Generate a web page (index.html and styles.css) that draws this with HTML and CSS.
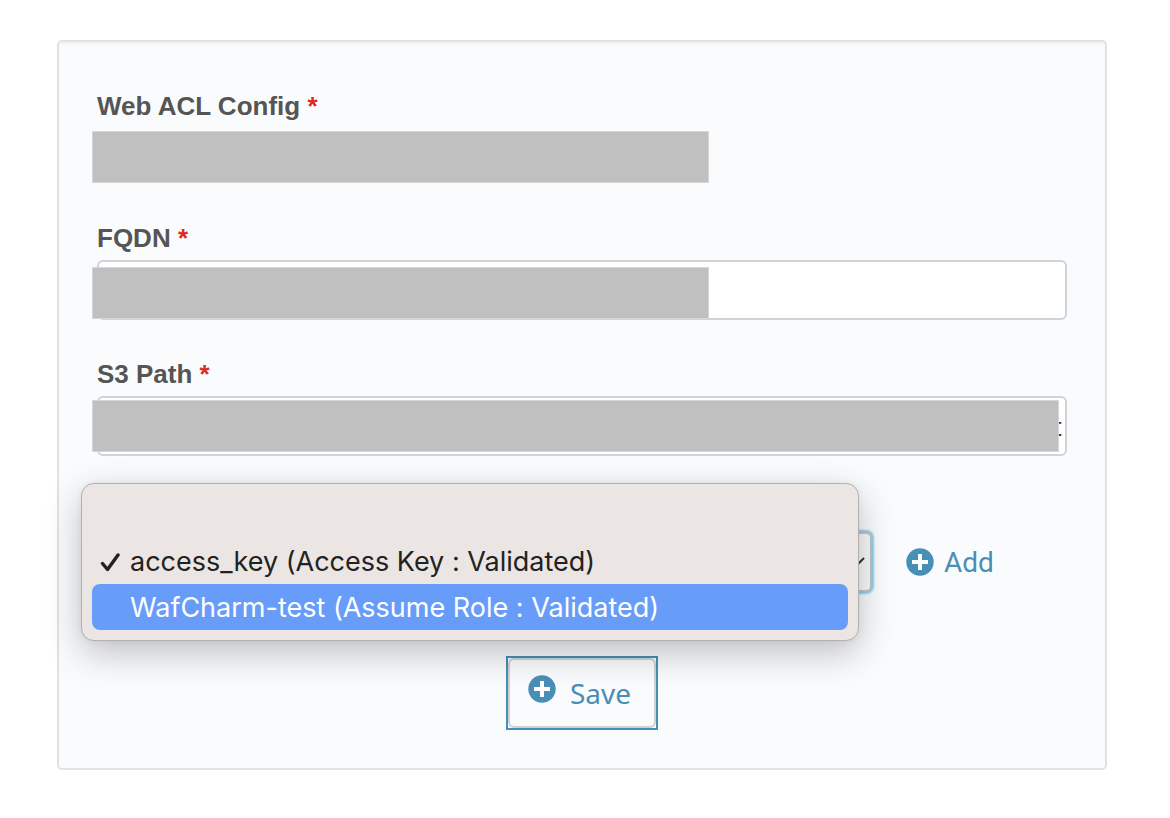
FILE: index.html
```html
<!DOCTYPE html>
<html lang="en">
<head>
<meta charset="utf-8">
<meta name="viewport" content="width=device-width, initial-scale=1">
<title>Web ACL Config</title>
<link rel="stylesheet" href="styles.css">
</head>
<body>
<form class="card">
  <div class="group">
    <label class="label" for="acl">Web ACL Config <span class="required">*</span></label>
    <div class="field">
      <input class="plain" id="acl" type="text" readonly>
      <span class="mask mask-acl"></span>
    </div>
  </div>
  <div class="group">
    <label class="label" for="fqdn">FQDN <span class="required">*</span></label>
    <div class="field">
      <input class="input" id="fqdn" type="text">
      <span class="mask mask-fqdn"></span>
    </div>
  </div>
  <div class="group">
    <label class="label" for="path">S3 Path <span class="required">*</span></label>
    <div class="field">
      <input class="input input-end" id="path" type="text" value="t">
      <span class="mask mask-path"></span>
    </div>
  </div>
  <div class="credential">
    <div class="picker">
      <select class="select" aria-label="Credential">
        <option>access_key (Access Key : Validated)</option>
        <option>WafCharm-test (Assume Role : Validated)</option>
      </select>
      <svg class="chevron" viewBox="0 0 20 12" aria-hidden="true"><path d="M2 2l8 8 8-8"/></svg>
      <div class="menu" role="listbox" aria-label="Credential">
        <button class="option" type="button" role="option" aria-label="None"></button>
        <button class="option" type="button" role="option" aria-selected="true"><svg class="check" viewBox="0 0 20 20" aria-hidden="true"><path d="M2.500 11.500l5 6L18 3"/></svg>access_key (Access Key : Validated)</button>
        <button class="option option-active" type="button" role="option">WafCharm-test (Assume Role : Validated)</button>
      </div>
    </div>
    <a class="add" href="#"><svg class="plus" viewBox="0 0 28 28" aria-hidden="true"><circle cx="14" cy="14" r="13.700"/><path d="M14 6v16M6 14h16"/></svg>Add</a>
  </div>
  <button class="save" type="submit"><span class="save-face"><svg class="plus" viewBox="0 0 28 28" aria-hidden="true"><circle cx="14" cy="14" r="13.700"/><path d="M14 6v16M6 14h16"/></svg><span class="save-text">Save</span></span></button>
</form>
</body>
</html>
```
FILE: styles.css
```css
* {
  box-sizing: border-box;
}

body {
  margin: 0;
  padding: 40px 63px 48px 57px;
  background: #fff;
  font-family: "Liberation Sans", Arial, sans-serif;
}

.card {
  display: flex;
  flex-direction: column;
  gap: 36px;
  padding: 46px 38px 38px;
  border: 2px solid #e1e2e3;
  border-radius: 5px;
  background: #fafbfd;
  box-shadow: inset 0 2px 2px #f1f2f4;
}

.group {
  display: flex;
  flex-direction: column;
  gap: 4px;
}

.label {
  color: #555;
  font-size: 26px;
  font-weight: bold;
  line-height: 36px;
}

.required {
  color: #dd2c1e;
}

.field {
  position: relative;
  display: flex;
}

.plain,
.input {
  flex: 1;
  min-width: 0;
  height: 60px;
  padding: 0 4px;
  border: 2px solid #ced3d8;
  border-radius: 6px;
  background: #fff;
  color: #333;
  font: 26px "Noto Sans", sans-serif;
}

.plain {
  height: 56px;
  border: 0;
  background: transparent;
}

.input-end {
  padding: 0 3px;
  text-align: right;
}

.mask {
  position: absolute;
  left: -5px;
  height: 52px;
  border: 1px solid #d6d6d6;
  background: #c0c0c0;
}

.mask-acl {
  top: 3px;
  right: 358px;
}

.mask-fqdn {
  top: 7px;
  right: 358px;
}

.mask-path {
  top: 4px;
  right: 8px;
}

.credential {
  display: flex;
  align-items: center;
  gap: 34px;
  padding-top: 40px;
}

.picker {
  position: relative;
  flex: 0 1 775px;
}

.select {
  display: block;
  appearance: none;
  width: 100%;
  height: 60px;
  padding: 0 40px 0 12px;
  border: 2px solid #c2c5c8;
  border-radius: 6px;
  outline: 0;
  background: #fafafa;
  box-shadow: 0 0 2px 2px #8ccdee;
  color: #222;
  font: 27px Inter, sans-serif;
}

.chevron {
  position: absolute;
  top: 24px;
  right: 6px;
  width: 20px;
  height: 12px;
  fill: none;
  stroke: #333;
  stroke-width: 2;
}

.menu {
  position: absolute;
  z-index: 1;
  top: -49px;
  left: -16px;
  right: 13px;
  padding: 8px 10px 10px;
  border: 1px solid #b3b1b0;
  border-radius: 13px;
  background: #ebe6e3;
  box-shadow: 0 12px 36px rgba(0, 0, 0, 0.24), 0 0 6px rgba(0, 0, 0, 0.06);
}

.option {
  display: block;
  position: relative;
  width: 100%;
  height: 46px;
  padding: 0 38px;
  border: 0;
  border-radius: 8px;
  background: transparent;
  color: #222;
  font: 27px Inter, sans-serif;
  font-feature-settings: "calt" 0;
  text-align: left;
  white-space: nowrap;
}

.option-active {
  background: #679cf8;
  color: #fff;
}

.check {
  position: absolute;
  top: 14px;
  left: 8px;
  width: 20px;
  height: 20px;
  fill: none;
  stroke: #222;
  stroke-width: 3.4;
  stroke-linecap: round;
  stroke-linejoin: round;
}

.add {
  display: flex;
  align-items: center;
  gap: 10px;
  color: #488fb8;
  font: 28px Roboto, sans-serif;
  text-decoration: none;
}

.plus {
  width: 28px;
  height: 28px;
  fill: #488fb8;
  stroke: #fff;
  stroke-width: 4;
}

.plus circle {
  stroke: none;
}

.save {
  align-self: center;
  margin-top: 28px;
  padding: 0;
  border: 2px solid #488fb8;
  background: transparent;
  color: #488fb8;
  font: 28px "Noto Sans", sans-serif;
}

.save-face {
  display: flex;
  align-items: flex-start;
  gap: 14px;
  height: 70px;
  padding: 15px 23px 15px 18px;
  border: 2px solid #cdd2d6;
  border-radius: 6px;
}

.save-text {
  line-height: 36px;
}
```
